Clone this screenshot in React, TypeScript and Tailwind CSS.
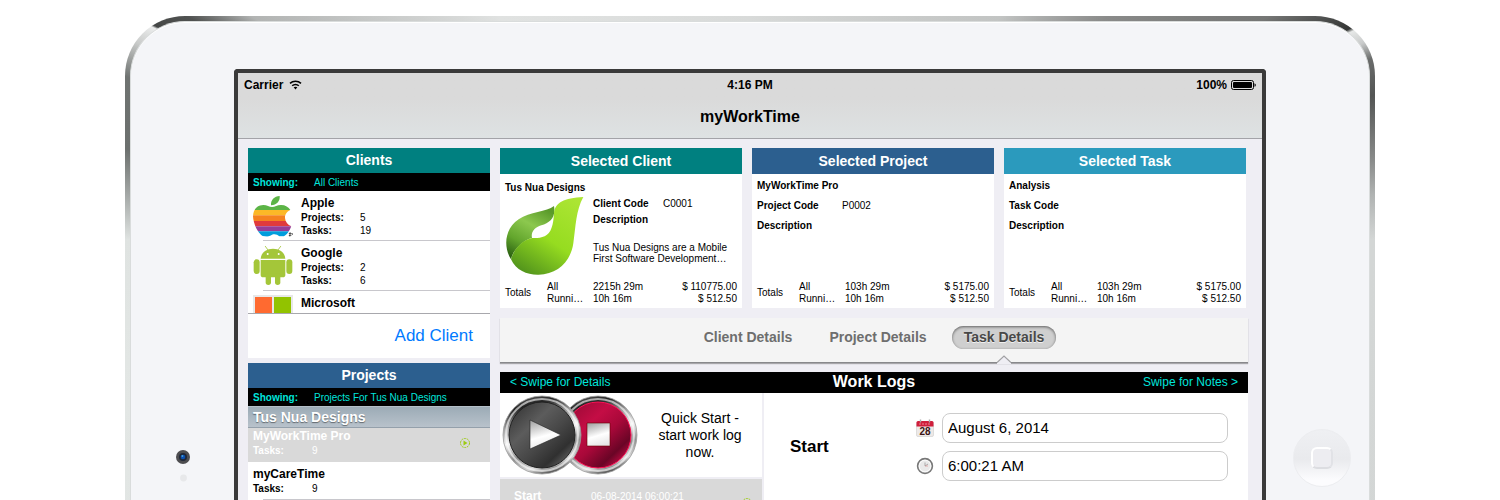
import { useState } from "react";
import clsx from "clsx";

const CLIENTS = [
  { name: "Apple", projects: 5, tasks: 19, icon: <AppleIcon /> },
  { name: "Google", projects: 2, tasks: 6, icon: <AndroidIcon /> },
  { name: "Microsoft", projects: 3, icon: <WindowsIcon /> },
];

const TABS = ["Client Details", "Project Details", "Task Details"];

function AppleIcon() {
  return (
    <svg viewBox="48 165 126 126" className="h-[42px] w-[42px]" aria-hidden="true">
      <defs>
        <clipPath id="apple-body">
          <path d="M108 201C117 201 123 195 135 195C148 195 158 201 163 210C151 216 147 224 147 234C148 246 155 254 166 259C161 272 152 285 144 289H130C124 283 116 281 108 284C101 289 92 291 80 288C64 278 52 250 51 229C52 209 62 196 82 195C93 195 100 201 108 201Z" />
        </clipPath>
      </defs>
      <path d="M105 196C103 181 115 168 131 168C133 182 122 196 105 196Z" fill="#5cb446" />
      <g clipPath="url(#apple-body)">
        <path d="M48 190h126v20H48z" fill="#5cb446" />
        <path d="M48 210h126v16H48z" fill="#fcb827" />
        <path d="M48 226h126v17H48z" fill="#f5821f" />
        <path d="M48 243h126v16H48z" fill="#e03a3c" />
        <path d="M48 259h126v15H48z" fill="#963d97" />
        <path d="M48 274h126v17H48z" fill="#009ddc" />
      </g>
      <path d="M160 279h5v3h-5zM167 279l3 3-3 4M160 285h3v3h-3z" fill="none" stroke="#111" strokeWidth="2" />
    </svg>
  );
}

function AndroidIcon() {
  return (
    <svg viewBox="48 316 126 126" className="h-[42px] w-[42px]" aria-hidden="true">
      <g fill="#a4c639">
        <path d="M74 357C75 340 90 327 111 327C132 327 147 340 148 357Z" />
        <path d="M74 361H148V405Q148 413 140 413H82Q74 413 74 405Z" />
        <rect x="53" y="359" width="18" height="44" rx="9" />
        <rect x="151" y="359" width="18" height="44" rx="9" />
        <rect x="89" y="400" width="16" height="36" rx="8" />
        <rect x="117" y="400" width="16" height="36" rx="8" />
      </g>
      <path d="M96 331L88 320M126 331L134 320" stroke="#a4c639" strokeWidth="2.5" strokeLinecap="round" />
      <circle cx="95" cy="343" r="3" fill="#fff" />
      <circle cx="128" cy="343" r="3" fill="#fff" />
    </svg>
  );
}

function WindowsIcon() {
  return (
    <svg viewBox="0 0 42 42" className="h-[42px] w-[42px]" aria-hidden="true">
      <path d="M1 0H41V41H1Z" fill="#e8e8e8" />
      <path d="M3 2H20V19H3Z" fill="#ff6a30" />
      <path d="M22 2H39V19H22Z" fill="#92c300" />
      <path d="M3 21H20V38H3Z" fill="#00a3ee" />
      <path d="M22 21H39V38H22Z" fill="#ffb900" />
    </svg>
  );
}

function TusNuaLogo() {
  return (
    <svg viewBox="27 168 240 240" className="h-20 w-20 shrink-0" aria-hidden="true">
      <defs>
        <linearGradient id="leaf-dark" x1="0.7" y1="0" x2="0.2" y2="1">
          <stop offset="0" stopColor="#5a9a2a" />
          <stop offset="0.35" stopColor="#8cc84e" />
          <stop offset="0.7" stopColor="#62a52c" />
          <stop offset="1" stopColor="#2c6212" />
        </linearGradient>
        <linearGradient id="leaf-light" x1="0.85" y1="0" x2="0.25" y2="1">
          <stop offset="0" stopColor="#ace534" />
          <stop offset="0.55" stopColor="#96dc20" />
          <stop offset="1" stopColor="#54961c" />
        </linearGradient>
      </defs>
      <path d="M174 198C152 216 102 214 68 238C28 264 20 318 45 358C52 328 80 302 108 294C104 276 116 262 136 256C162 248 180 232 174 198Z" fill="url(#leaf-dark)" />
      <path d="M262 171C205 174 176 188 174 220C172 254 166 280 146 289C134 294 120 295 108 294C80 300 53 326 45 358C60 392 95 405 128 404C184 403 224 365 232 310C239 260 240 210 262 171Z" fill="url(#leaf-light)" />
    </svg>
  );
}

function RoundButtonArt({ kind }: { kind: "play" | "stop" }) {
  const face = kind === "play" ? "face-play" : "face-stop";
  const rim = kind === "play" ? "rim-play" : "rim-stop";
  const glyph = kind === "play" ? "glyph-play" : "glyph-stop";
  return (
    <svg viewBox="0 0 80 80" className="h-20 w-20" aria-hidden="true">
      <defs>
        <linearGradient id={rim} x1="0.3" y1="0" x2="0.6" y2="1">
          <stop offset="0" stopColor="#555" />
          <stop offset="0.12" stopColor="#222" />
          <stop offset="0.3" stopColor="#9a9a9a" />
          <stop offset="0.5" stopColor="#f4f4f4" />
          <stop offset="0.7" stopColor="#8e8e8e" />
          <stop offset="0.88" stopColor="#d8d8d8" />
          <stop offset="1" stopColor="#444" />
        </linearGradient>
        <linearGradient id={face} x1="0.1" y1="0.1" x2="0.9" y2="0.95">
          <stop offset="0" stopColor={kind === "play" ? "#3a3a3a" : "#a00a38"} />
          <stop offset="0.3" stopColor={kind === "play" ? "#5c5c5c" : "#c40d45"} />
          <stop offset="0.55" stopColor={kind === "play" ? "#484848" : "#a80839"} />
          <stop offset="0.8" stopColor={kind === "play" ? "#303030" : "#6a0526"} />
          <stop offset="1" stopColor={kind === "play" ? "#6a6a6a" : "#d80b4a"} />
        </linearGradient>
        <linearGradient id={glyph} x1="0.3" y1="0" x2="0.6" y2="1">
          <stop offset="0" stopColor="#aaa" />
          <stop offset="0.55" stopColor="#fff" />
          <stop offset="1" stopColor="#e6e6e6" />
        </linearGradient>
      </defs>
      <circle cx="40" cy="40" r="39" fill={`url(#${rim})`} stroke="#9b9b9b" strokeWidth="0.8" />
      <circle cx="40" cy="40" r="36" fill="none" stroke="#fff" strokeOpacity="0.6" strokeWidth="2" />
      <circle cx="40" cy="40" r="33" fill={`url(#${face})`} stroke={kind === "play" ? "#222" : "#ff1055"} strokeWidth="1" />
      {kind === "play" ? (
        <path d="M28 25L59 40L28 54Z" fill={`url(#${glyph})`} stroke="#222" strokeWidth="0.6" />
      ) : (
        <path d="M29 28H52V51H29Z" fill={`url(#${glyph})`} stroke="#600" strokeWidth="0.6" />
      )}
    </svg>
  );
}

function RunningIcon() {
  return (
    <svg viewBox="0 0 12 12" className="h-3 w-3" aria-label="Running">
      <circle cx="6" cy="6" r="4.5" fill="none" stroke="#9ccb12" strokeWidth="1" strokeDasharray="2 0.8" />
      <path d="M4.5 3.5L8.5 6L4.5 8.5Z" fill="#9ccb12" />
    </svg>
  );
}

function StatusBar() {
  return (
    <div className="grid grid-cols-3 items-center px-1.5 pt-1 text-xs leading-4 font-bold">
      <div className="flex items-center gap-1.5">
        <span>Carrier</span>
        <svg viewBox="0 0 13 10" className="h-[10px] w-[13px]" aria-label="Wi-Fi">
          <path d="M1 3.4C4 0.5 9 0.5 12 3.4M3.2 5.8C5 4 8 4 9.8 5.8" fill="none" stroke="#000" strokeWidth="1.5" />
          <path d="M4.6 7.3C5.7 6.4 7.3 6.4 8.4 7.3L6.5 9.4Z" />
        </svg>
      </div>
      <span className="text-center">4:16 PM</span>
      <div className="flex items-center justify-end gap-1">
        <span>100%</span>
        <svg viewBox="0 0 25 10" className="h-[10px] w-[25px]" aria-label="Battery">
          <rect x="0.5" y="0.5" width="22" height="9" rx="2" fill="none" stroke="#000" />
          <rect x="2" y="2" width="19" height="6" rx="1" />
          <path d="M23.5 3.2Q24.8 3.6 24.8 5Q24.8 6.4 23.5 6.8Z" />
        </svg>
      </div>
    </div>
  );
}

function Showing({ value }: { value: string }) {
  return (
    <div className="flex h-[18px] bg-black px-[5px] text-[10px] leading-[19px] text-[#00e5dc]">
      <span className="w-[61px] font-bold">Showing:</span>
      <span>{value}</span>
    </div>
  );
}

function ClientsPanel() {
  return (
    <section className="bg-white">
      <h2 className="bg-[#008080] text-center text-sm leading-[25px] font-bold text-white">Clients</h2>
      <Showing value="All Clients" />
      <ul className="h-[123px] overflow-hidden border-b border-[#a8a8ad]">
        {CLIENTS.map((client) => (
          <li key={client.name} className="h-[50px]">
            <div className="flex h-[49px] gap-[7px] pt-1 pl-1">
              {client.icon}
              <div className="grid grid-cols-[59px_1fr] content-start text-[10px] leading-[13px]">
                <h3 className="col-span-2 pt-px text-xs leading-[15px] font-bold">{client.name}</h3>
                <span className="font-bold">Projects:</span>
                <span>{client.projects}</span>
                {client.tasks && (
                  <>
                    <span className="font-bold">Tasks:</span>
                    <span>{client.tasks}</span>
                  </>
                )}
              </div>
            </div>
            <div className="ml-[15px] border-b border-[#c8c7cc]" />
          </li>
        ))}
      </ul>
      <div className="flex h-11 items-center justify-end pr-[17px]">
        <button type="button" className="text-[17px] leading-5 text-[#007aff]">
          Add Client
        </button>
      </div>
    </section>
  );
}

function ProjectsPanel() {
  return (
    <section className="bg-white">
      <h2 className="bg-[#2c5f8f] text-center text-sm leading-[25px] font-bold text-white">Projects</h2>
      <Showing value="Projects For Tus Nua Designs" />
      <h3 className="border-t border-b border-t-[#b4bfc8] border-b-[#94a0ab] bg-linear-to-b from-[#9cabb6] to-[#b8c2cb] px-[5px] text-sm leading-5 font-bold text-white text-shadow-[0_1px_1px_rgba(0,0,0,0.45)]">
        Tus Nua Designs
      </h3>
      <ul>
        <li className="flex h-[34px] items-center justify-between bg-[#d9d9d9] pr-[19px] pb-1 pl-[5px] text-white">
          <div className="grid grid-cols-[59px_1fr] text-[10px] leading-[14px]">
            <h4 className="col-span-2 text-xs leading-[15px] font-bold">MyWorkTime Pro</h4>
            <span className="font-bold">Tasks:</span>
            <span>9</span>
          </div>
          <RunningIcon />
        </li>
        <li className="h-[38px] pt-[5px] pl-[5px]">
          <div className="grid grid-cols-[59px_1fr] text-[10px] leading-[14px]">
            <h4 className="col-span-2 text-xs leading-[15px] font-bold">myCareTime</h4>
            <span className="font-bold">Tasks:</span>
            <span>9</span>
          </div>
          <div className="mt-[3px] ml-[10px] border-b border-[#c8c7cc]" />
        </li>
      </ul>
    </section>
  );
}

function Totals({ all, amount }: { all: string; amount: string }) {
  return (
    <table className="mt-auto w-full table-fixed text-[10px] leading-3">
      <tbody>
        <tr>
          <th rowSpan={2} className="w-[42px] text-left align-middle font-normal">
            Totals
          </th>
          <td className="w-[46px]">All</td>
          <td>{all}</td>
          <td className="text-right">{amount}</td>
        </tr>
        <tr>
          <td>Runni…</td>
          <td>10h 16m</td>
          <td className="text-right">$ 512.50</td>
        </tr>
      </tbody>
    </table>
  );
}

function SelectedCards() {
  return (
    <div className="grid grid-cols-3 gap-2.5 pr-0.5 text-[10px] leading-3">
      <section className="flex h-40 flex-col bg-white">
        <h2 className="bg-[#008080] text-center text-sm leading-[26px] font-bold text-white">Selected Client</h2>
        <div className="flex flex-1 flex-col px-[5px] pt-2 pb-[3px]">
          <h3 className="font-bold">Tus Nua Designs</h3>
          <div className="flex gap-2 pt-0.5">
            <TusNuaLogo />
            <div className="pt-0.5">
              <dl className="grid grid-cols-[70px_1fr] gap-y-1">
                <dt className="font-bold">Client Code</dt>
                <dd>C0001</dd>
                <dt className="font-bold">Description</dt>
              </dl>
              <p className="pt-4 leading-[11px] whitespace-nowrap">
                Tus Nua Designs are a Mobile
                <br />
                First Software Development…
              </p>
            </div>
          </div>
          <Totals all="2215h 29m" amount="$ 110775.00" />
        </div>
      </section>

      <section className="flex h-40 flex-col bg-white">
        <h2 className="bg-[#2c5f8f] text-center text-sm leading-[26px] font-bold text-white">Selected Project</h2>
        <div className="flex flex-1 flex-col px-[5px] pt-1.5 pb-[3px]">
          <h3 className="font-bold">MyWorkTime Pro</h3>
          <dl className="grid grid-cols-[85px_1fr] gap-y-2 pt-2">
            <dt className="font-bold">Project Code</dt>
            <dd>P0002</dd>
            <dt className="font-bold">Description</dt>
          </dl>
          <Totals all="103h 29m" amount="$ 5175.00" />
        </div>
      </section>

      <section className="flex h-40 flex-col bg-white">
        <h2 className="bg-[#2b9abd] text-center text-sm leading-[26px] font-bold text-white">Selected Task</h2>
        <div className="flex flex-1 flex-col px-[5px] pt-1.5 pb-[3px]">
          <h3 className="font-bold">Analysis</h3>
          <dl className="grid gap-y-2 pt-2">
            <dt className="font-bold">Task Code</dt>
            <dt className="font-bold">Description</dt>
          </dl>
          <Totals all="103h 29m" amount="$ 5175.00" />
        </div>
      </section>
    </div>
  );
}

function DetailTabs() {
  const [active, setActive] = useState("Task Details");

  return (
    <nav className="mt-2.5 flex h-[45px] justify-center gap-[13px] border-b border-[#88888b] bg-[#f4f4f4] pt-2 shadow-[0_1px_1px_rgba(0,0,0,0.3)]">
      {TABS.map((tab) => (
        <div key={tab} className="relative">
          <button
            type="button"
            onClick={() => setActive(tab)}
            className={clsx(
              "block h-[23px] rounded-full px-3 pb-px text-sm leading-5 font-bold",
              active === tab
                ? "bg-[#cfcfcf] text-[#484848] shadow-[inset_0_1px_3px_rgba(0,0,0,0.55)] text-shadow-[0_1px_0_rgba(255,255,255,0.7)]"
                : "text-[#6e6e6e]"
            )}
          >
            {tab}
          </button>
          {/* Notch pointing at the open tab */}
          {active === tab && (
            <svg viewBox="0 0 14 9" className="absolute -bottom-0.5 left-1/2 h-[9px] w-[14px] -translate-x-1/2" aria-hidden="true">
              <path d="M0 9V7.5L7 1L14 7.5V9Z" fill="#efeef4" />
              <path d="M0 7.5L7 1L14 7.5" fill="none" stroke="#a0a0a3" strokeWidth="1.2" />
            </svg>
          )}
        </div>
      ))}
    </nav>
  );
}

function CalendarIcon() {
  return (
    <svg viewBox="0 0 18 18" className="h-[18px] w-[18px]" aria-hidden="true">
      <rect x="0.5" y="3" width="17" height="14.5" rx="1.5" fill="#eee9e7" stroke="#ccc" strokeWidth="0.6" />
      <path d="M0.5 7.5V3.5Q0.5 2 2 2H16Q17.5 2 17.5 3.5V7.5Z" fill="#d01f3c" />
      <path d="M4.5 0.5V3.5M13.5 0.5V3.5" stroke="#aaa" strokeWidth="1.4" />
      <path d="M3 5H15" stroke="#eb8795" strokeWidth="1" strokeDasharray="2 1" />
      <text x="9" y="15.6" textAnchor="middle" fontSize="10" fontWeight="bold" fill="#3a1414">
        28
      </text>
    </svg>
  );
}

function ClockIcon() {
  return (
    <svg viewBox="0 0 18 18" className="h-[18px] w-[18px]" aria-hidden="true">
      <circle cx="9" cy="9" r="7.4" fill="#e9e9e9" stroke="#777" strokeWidth="1.6" />
      <circle cx="9" cy="9" r="5.8" fill="none" stroke="#fff" strokeWidth="0.8" />
      <path d="M9 9V5.5M9 9L12 7" stroke="#999" strokeWidth="0.8" />
      <path d="M9 9H12" stroke="#d88" strokeWidth="0.6" />
    </svg>
  );
}

function WorkLogs() {
  const [date, setDate] = useState("August 6, 2014");
  const [time, setTime] = useState("6:00:21 AM");

  return (
    <section className="mt-[9px]">
      <header className="grid h-[21px] grid-cols-3 items-start bg-black px-2.5 text-[#00e5dc]">
        <button type="button" className="text-left text-xs leading-5">
          &lt; Swipe for Details
        </button>
        <h2 className="text-center text-base leading-5 font-bold text-white">Work Logs</h2>
        <button type="button" className="text-right text-xs leading-5">
          Swipe for Notes &gt;
        </button>
      </header>

      <div className="grid grid-cols-[262px_1fr] gap-0.5">
        <div className="flex flex-col gap-0.5">
          <div className="flex h-[84px] items-center bg-white pl-0.5">
            <button type="button" aria-label="Start work log" className="z-10 rounded-full">
              <RoundButtonArt kind="play" />
            </button>
            <button type="button" aria-label="Stop work log" className="-ml-6 rounded-full">
              <RoundButtonArt kind="stop" />
            </button>
            <p className="flex-1 px-3 text-center text-sm leading-[17px]">
              Quick Start -
              <br />
              start work log
              <br />
              now.
            </p>
          </div>
          <div className="flex h-11 bg-[#d9d9d9] pt-[9px] pr-[9px] pl-[14px] text-[10px] leading-[18px] text-white">
            <span className="w-[77px] text-xs leading-4 font-bold">Start</span>
            <span className="flex-1">06-08-2014 06:00:21</span>
            <span className="pt-[9px]">
              <RunningIcon />
            </span>
          </div>
        </div>

        <div className="flex justify-between bg-white pt-5 pr-5 pl-[26px]">
          <h3 className="pt-6 text-[17px] leading-5 font-bold">Start</h3>
          <div className="flex w-[312px] flex-col gap-2">
            <div className="flex items-center gap-2">
              <label htmlFor="start-date" aria-label="Start date">
                <CalendarIcon />
              </label>
              <input
                id="start-date"
                type="text"
                value={date}
                onChange={(e) => setDate(e.target.value)}
                className="h-[30px] min-w-0 flex-1 rounded-lg border border-[#cccccc] bg-white px-[5px] pb-0.5 text-[15px] text-black"
              />
            </div>
            <div className="flex items-center gap-2">
              <label htmlFor="start-time" aria-label="Start time">
                <ClockIcon />
              </label>
              <input
                id="start-time"
                type="text"
                value={time}
                onChange={(e) => setTime(e.target.value)}
                className="h-[30px] min-w-0 flex-1 rounded-lg border border-[#cccccc] bg-white px-[5px] pb-0.5 text-[15px] text-black"
              />
            </div>
          </div>
        </div>
      </div>
    </section>
  );
}

function Camera() {
  return (
    <svg viewBox="0 0 20 36" className="h-9 w-5" aria-hidden="true">
      <circle cx="10" cy="8" r="7" fill="#4d4d50" />
      <circle cx="10" cy="8" r="4" fill="#202838" />
      <circle cx="10" cy="8" r="2.3" fill="#0a4fae" />
      <circle cx="9.4" cy="7" r="0.9" fill="#4aa0d8" />
      <circle cx="10.5" cy="29" r="3.4" fill="#e7e8ea" />
    </svg>
  );
}

function HomeButton() {
  return (
    <button
      type="button"
      aria-label="Home"
      className="flex h-[58px] w-[58px] items-center justify-center rounded-full border border-[#ecedf0] bg-linear-to-b from-[#eff0f3] from-0% via-[#e9eaed] via-52% to-[#fcfcfe] to-90%"
    >
      <span className="h-[22px] w-[22px] rounded-md border-2 border-t-white border-r-[#e1e2e6] border-b-[#dcdde1] border-l-white bg-[#ededf1]" />
    </button>
  );
}

export default function App() {
  return (
    <main className="h-screen overflow-hidden bg-white pt-4 font-['Liberation_Sans',Arial,sans-serif] text-black">
      {/* Metal rim of the tablet */}
      <div className="mx-auto min-h-screen w-full max-w-[1250px] rounded-t-[60px] bg-[conic-gradient(from_0deg_at_50%_300px,#d8dad9_0deg,#c2c4c3_40deg,#8a8b8a_50deg,#757675_60deg,#343635_64.4deg,#e6e8e7_64.7deg,#c8caca_66deg,#6a6c6b_67.5deg,#535554_70.5deg,#8a8c8b_76deg,#b0b3b2_79deg,#d3d6d5_83deg,#d5d8d7_180deg,#e3e7e5_262deg,#dfe3e1_277deg,#a4a8a6_281deg,#6c706e_285deg,#6f7371_291deg,#c8cac9_294deg,#eceded_295.8deg,#454746_296deg,#505251_298deg,#b2b4b3_301deg,#c6c8c7_308deg,#e0e2e1_320deg,#d8dad9_360deg)] px-[5px] pt-[5px]">
        <div className="grid min-h-screen grid-cols-[103px_1fr_103px] rounded-t-[55px] border border-b-0 border-[#d9dcdc] bg-[#f4f5f8] pt-[47px] shadow-[inset_0_1px_0_#fff]">
          <div className="flex justify-center pt-[380px]">
            <Camera />
          </div>

          <div className="rounded-t-[4px] border-4 border-b-0 border-[#3a3a3a] bg-[#efeef4]">
            <header className="h-[66px] border-b border-[#a3a3a8] bg-linear-to-b from-[#dadada] from-40% to-[#dee2e3]">
              <StatusBar />
              <h1 className="pt-[13px] text-center text-base leading-[22px] font-bold">myWorkTime</h1>
            </header>
            <div className="grid grid-cols-[242px_1fr] gap-2.5 pt-[9px] pr-[14px] pl-2.5">
              <aside className="flex flex-col gap-[5px]">
                <ClientsPanel />
                <ProjectsPanel />
              </aside>
              <div>
                <SelectedCards />
                <DetailTabs />
                <WorkLogs />
              </div>
            </div>
          </div>

          <div className="flex justify-center pt-[360px] pl-2">
            <HomeButton />
          </div>
        </div>
      </div>
    </main>
  );
}
